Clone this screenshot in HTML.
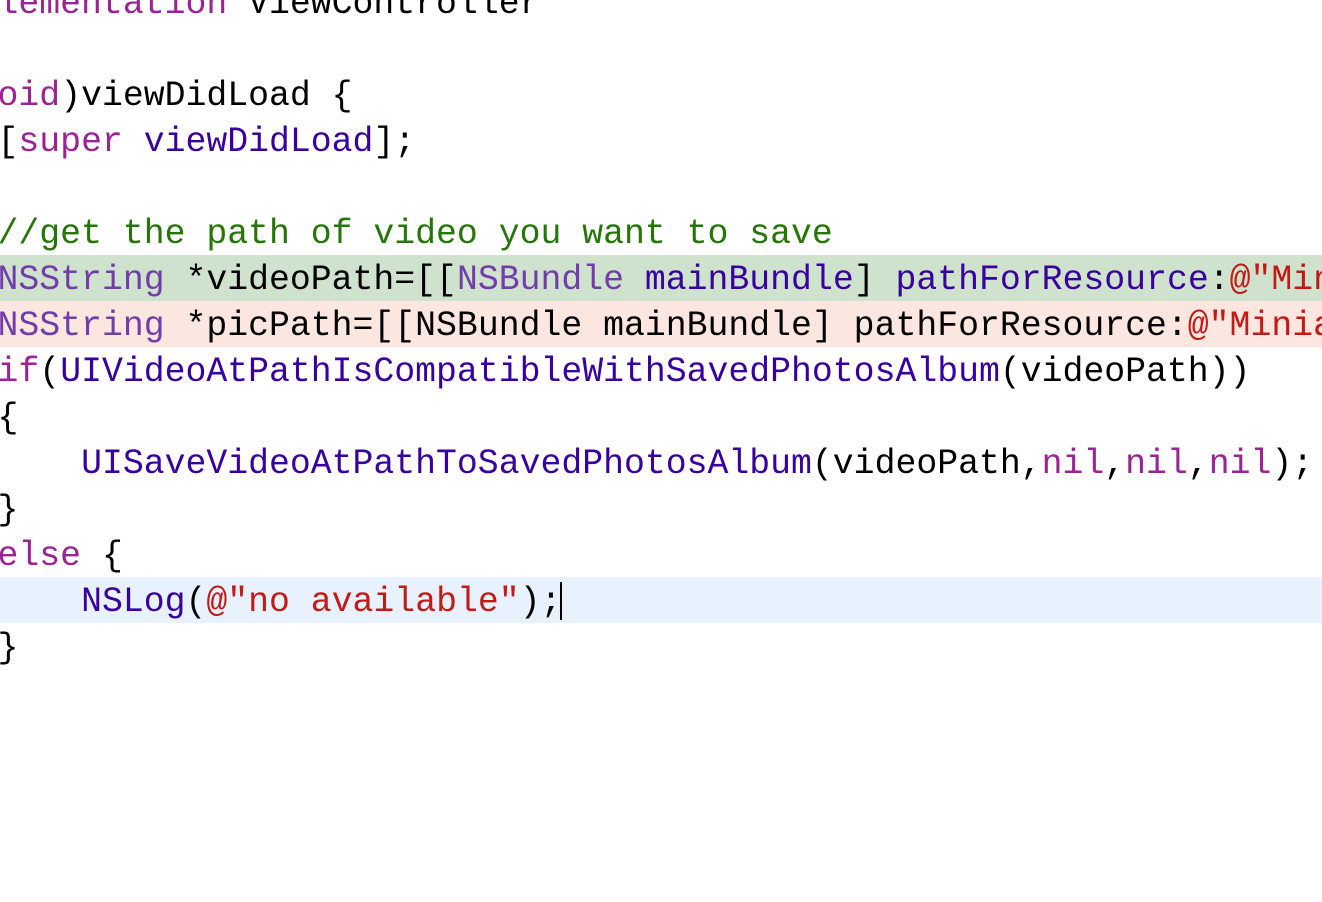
<html><head><style>
html,body{margin:0;width:1322px;height:902px;overflow:hidden;background:#fff}
#w{position:relative;width:1322px;height:902px;overflow:hidden}
.l{position:absolute;left:-86px;height:46px;line-height:46px;font-family:"Liberation Mono",monospace;font-size:34.8px;white-space:pre;color:#000;width:1400px}
.k{color:#9B2393}.c{color:#703DAA}.f{color:#3900A0}.g{color:#267507}.s{color:#C41A16}
.bg{position:absolute;left:0;width:1322px;height:46px}
</style></head><body><div id="w">
<div class="bg" style="top:255px;background:#CFE2CD"></div>
<div class="bg" style="top:301px;background:#FCE6E0"></div>
<div class="bg" style="top:577px;background:#E8F2FF"></div>
<div class="l" style="top:-18px"><span class="k">@implementation</span> ViewController</div>
<div class="l" style="top:74px">- (<span class="k">void</span>)viewDidLoad {</div>
<div class="l" style="top:120px">    [<span class="k">super</span> <span class="f">viewDidLoad</span>];</div>
<div class="l" style="top:212px">    <span class="g">//get the path of video you want to save</span></div>
<div class="l" style="top:258px">    <span class="c">NSString</span> *videoPath=[[<span class="c">NSBundle</span> <span class="f">mainBundle</span>] <span class="f">pathForResource</span>:<span class="s">@"Miniature"</span></div>
<div class="l" style="top:304px">    <span class="c">NSString</span> *picPath=[[NSBundle mainBundle] pathForResource:<span class="s">@"Miniature"</span></div>
<div class="l" style="top:350px">    <span class="k">if</span>(<span class="f">UIVideoAtPathIsCompatibleWithSavedPhotosAlbum</span>(videoPath))</div>
<div class="l" style="top:396px">    {</div>
<div class="l" style="top:442px">        <span class="f">UISaveVideoAtPathToSavedPhotosAlbum</span>(videoPath,<span class="k">nil</span>,<span class="k">nil</span>,<span class="k">nil</span>);</div>
<div class="l" style="top:488px">    }</div>
<div class="l" style="top:534px">    <span class="k">else</span> {</div>
<div class="l" style="top:580px">        <span class="f">NSLog</span>(<span class="s">@"no available"</span>);</div>
<div style="position:absolute;left:560px;top:582px;width:2px;height:38px;background:#000"></div>
<div class="l" style="top:626px">    }</div>
</div></body></html>
